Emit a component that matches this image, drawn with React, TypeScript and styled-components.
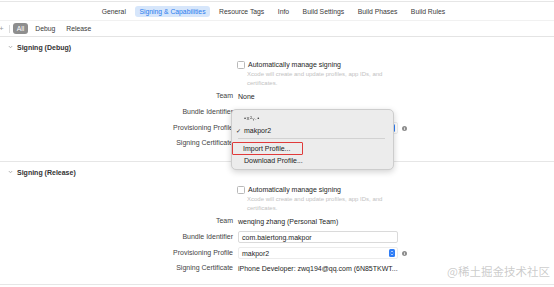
import React from "react"
import styled, { createGlobalStyle } from "styled-components"

const GlobalStyle = createGlobalStyle`
  html, body {
    margin: 0;
    padding: 0;
    background: #fff;
  }
  body {
    font-family: "Liberation Sans", Arial, sans-serif;
    color: #333;
  }
`

const Page = styled.div`
  position: relative;
  width: 554px;
  height: 287px;
  overflow: hidden;
  background: #fff;
`

const TabBar = styled.div`
  margin-top: 1px;
  border-top: 1px solid #e6e6e6;
  height: 18px;
  display: flex;
  justify-content: center;
  align-items: center;
  gap: 5.5px;
  padding-right: 7px;
`

const Tab = styled.div<{ $active?: boolean }>`
  font-size: 6.8px;
  line-height: 7px;
  padding: 2px 4px;
  border-radius: 3px;
  color: ${p => (p.$active ? "#2b7cee" : "#3a3a3a")};
  background: ${p => (p.$active ? "#d6e6fb" : "transparent")};
`

const FilterBar = styled.div`
  height: 15px;
  border-top: 1px solid #f1f1f1;
  border-bottom: 1px solid #e4e4e4;
  display: flex;
  align-items: center;
  gap: 3px;
`

const Plus = styled.span`
  margin-left: -1px;
  font-size: 8px;
  color: #9a9a9a;
`

const Divider = styled.span`
  width: 1px;
  height: 8px;
  margin: 0 0 0 2px;
  background: #dcdcdc;
`

const Filter = styled.div<{ $active?: boolean }>`
  font-size: 6.8px;
  line-height: 7px;
  padding: 2px 4px;
  border-radius: 3px;
  color: ${p => (p.$active ? "#fff" : "#3a3a3a")};
  background: ${p => (p.$active ? "#8e8e8e" : "transparent")};
`

const Section = styled.section<{ $pad: number }>`
  border-bottom: 1px solid #e6e6e6;
  padding-bottom: ${p => p.$pad}px;
`

const SectionHeader = styled.div`
  height: 20px;
  display: flex;
  align-items: center;
  gap: 4px;
  padding-left: 8px;
  font-size: 7px;
  font-weight: bold;
  color: #333;
`

const Form = styled.div`
  display: grid;
  grid-template-columns: 233px 160px auto;
  column-gap: 5px;
  align-items: center;
  justify-content: start;
`

const Label = styled.div<{ $h?: number }>`
  grid-column: 1;
  text-align: right;
  font-size: 7px;
  height: ${p => p.$h ?? 16}px;
  line-height: ${p => p.$h ?? 16}px;
  color: #444;
  white-space: nowrap;
`

const Value = styled.div`
  grid-column: 2 / span 2;
  font-size: 7px;
  color: #262626;
  white-space: nowrap;
`

const CheckRow = styled.div`
  grid-column: 2 / span 2;
  margin-top: 3px;
  height: 9px;
  display: flex;
  align-items: center;
  gap: 3px;
  margin-left: -1px;
  font-size: 7px;
  color: #262626;
`

const Box = styled.span`
  width: 6px;
  height: 6px;
  border: 1px solid #b9b9b9;
  border-radius: 1.5px;
  background: #fff;
`

const Hint = styled.div`
  grid-column: 2 / span 2;
  margin-top: 1px;
  padding-left: 9px;
  font-size: 6px;
  line-height: 9px;
  color: #c2c2c2;
`

const Field = styled.div`
  grid-column: 2;
  height: 10px;
  border: 1px solid #dadada;
  border-radius: 2px;
  padding: 0 3px;
  display: flex;
  align-items: center;
  font-size: 7px;
  color: #262626;
`

const Popup = styled(Field)`
  justify-content: space-between;
  padding-right: 2px;
  border-color: #ececec;
`

const Stepper = styled.span`
  width: 6px;
  height: 8px;
  border-radius: 1.5px;
  background: #2f7df6;
  display: flex;
  align-items: center;
  justify-content: center;
`

const Info = styled.span`
  grid-column: 3;
  width: 5px;
  height: 5px;
  margin-left: -1px;
  border-radius: 50%;
  background: #8d8d8d;
  display: flex;
  align-items: center;
  justify-content: center;
`

const Menu = styled.div`
  position: absolute;
  left: 231px;
  top: 109px;
  width: 161px;
  height: 57px;
  padding-top: 2px;
  border: 1px solid #cdcdcd;
  border-radius: 5px;
  background: #ececec;
  box-shadow: 0 2px 6px rgba(0, 0, 0, 0.18);
  z-index: 2;
`

const MenuItem = styled.div`
  height: 12px;
  display: flex;
  align-items: center;
  padding-left: 4px;
  font-size: 7px;
  color: #222;
`

const Gutter = styled.span`
  width: 8px;
  font-size: 6px;
`

const Blurred = styled.span`
  font-size: 6px;
  letter-spacing: 0.5px;
  color: #444;
  filter: blur(0.3px);
`

const Separator = styled.div`
  height: 1px;
  margin: 2px 8px 3px 6px;
  background: #d2d2d2;
`

const Marked = styled.span`
  margin-left: -4px;
  width: 71px;
  height: 13px;
  box-sizing: border-box;
  padding-left: 10px;
  border: 1.3px solid #e03a3a;
  border-radius: 1px;
  display: flex;
  align-items: center;
`

const Watermark = styled.div`
  position: absolute;
  right: 4px;
  bottom: 8px;
  font-family: "Noto Sans CJK SC", sans-serif;
  font-size: 11.5px;
  color: rgba(160, 160, 160, 0.55);
  z-index: 3;
`

const Chevron = () => (
  <svg width="5" height="4" viewBox="0 0 5 4">
    <path d="M0.8 1 L2.5 2.8 L4.2 1" fill="none" stroke="#9a9a9a" strokeWidth="0.7" />
  </svg>
)

const StepIcon = () => (
  <Stepper>
    <svg width="4" height="6" viewBox="0 0 4 6">
      <path d="M0.8 2.2 L2 1 L3.2 2.2 M0.8 3.8 L2 5 L3.2 3.8" fill="none" stroke="#fff" strokeWidth="0.6" />
    </svg>
  </Stepper>
)

const InfoIcon = () => (
  <Info>
    <svg width="3" height="3" viewBox="0 0 3 3">
      <rect x="1.1" y="0.2" width="0.8" height="0.5" fill="#fff" />
      <rect x="1.1" y="1.1" width="0.8" height="1.7" fill="#fff" />
    </svg>
  </Info>
)

const AutoSigning = () => (
  <>
    <Label $h={0} />
    <CheckRow>
      <Box />
      Automatically manage signing
    </CheckRow>
    <Hint>
      Xcode will create and update profiles, app IDs, and
      <br />
      certificates.
    </Hint>
  </>
)

export default function App() {
  const tabs = ["General", "Signing & Capabilities", "Resource Tags", "Info", "Build Settings", "Build Phases", "Build Rules"]
  return (
    <Page>
      <GlobalStyle />
      <TabBar>
        {tabs.map(t => (
          <Tab key={t} $active={t === "Signing & Capabilities"}>
            {t}
          </Tab>
        ))}
      </TabBar>
      <FilterBar>
        <Plus>+</Plus>
        <Divider />
        <Filter $active>All</Filter>
        <Filter>Debug</Filter>
        <Filter>Release</Filter>
      </FilterBar>

      <Section $pad={11}>
        <SectionHeader>
          <Chevron />
          Signing (Debug)
        </SectionHeader>
        <Form>
          <AutoSigning />
          <Label>Team</Label>
          <Value>None</Value>
          <Label>Bundle Identifier</Label>
          <Value />
          <Label>Provisioning Profile</Label>
          <Popup>
            <span />
            <StepIcon />
          </Popup>
          <InfoIcon />
          <Label $h={14}>Signing Certificate</Label>
          <Value />
        </Form>
      </Section>

      <Section $pad={9}>
        <SectionHeader>
          <Chevron />
          Signing (Release)
        </SectionHeader>
        <Form>
          <AutoSigning />
          <Label>Team</Label>
          <Value>wenqing zhang (Personal Team)</Value>
          <Label>Bundle Identifier</Label>
          <Field>com.baiertong.makpor</Field>
          <Label>Provisioning Profile</Label>
          <Popup>
            makpor2
            <StepIcon />
          </Popup>
          <InfoIcon />
          <Label $h={14}>Signing Certificate</Label>
          <Value>iPhone Developer: zwq194@qq.com (6N85TKWT...</Value>
        </Form>
      </Section>

      <Menu>
        <MenuItem>
          <Gutter />
          <Blurred>•x²ᵧ.•</Blurred>
        </MenuItem>
        <MenuItem>
          <Gutter>✓</Gutter>
          makpor2
        </MenuItem>
        <Separator />
        <MenuItem>
          <Marked>Import Profile...</Marked>
        </MenuItem>
        <MenuItem>
          <Gutter />
          Download Profile...
        </MenuItem>
      </Menu>

      <Watermark>@稀土掘金技术社区</Watermark>
    </Page>
  )
}
